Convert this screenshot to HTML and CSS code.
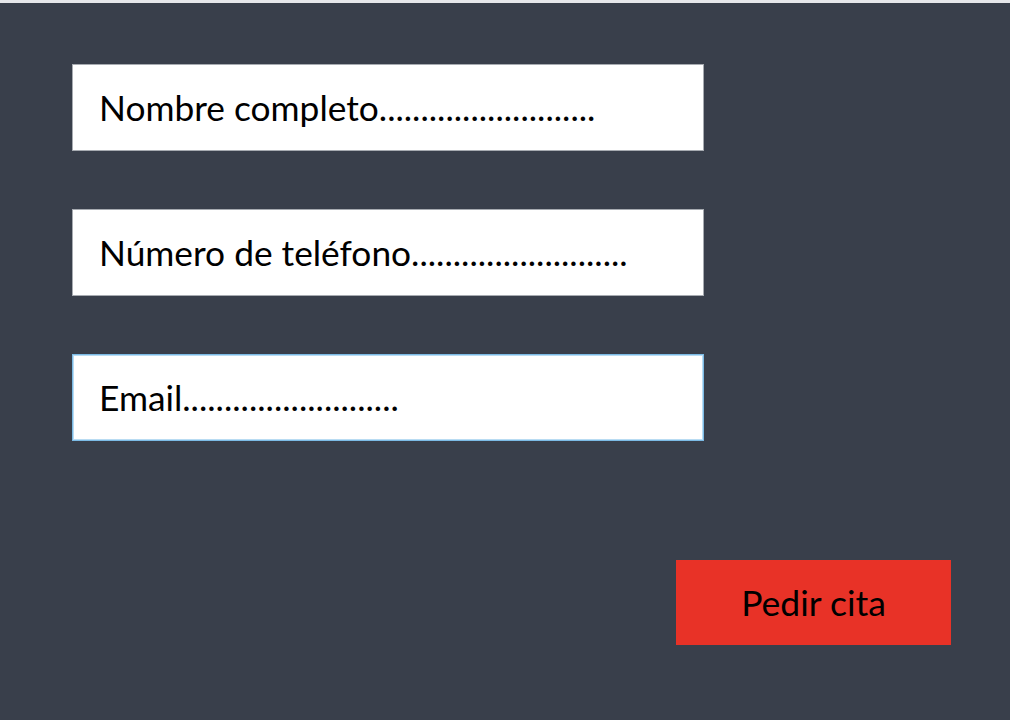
FILE: index.html
```html
<!DOCTYPE html>
<html lang="es">
<head>
<meta charset="utf-8">
<title>Pedir cita</title>
<link rel="stylesheet" href="styles.css">
</head>
<body>
<div class="topbar"></div>
<main class="panel">
  <form class="form">
    <div class="field"><span class="clip">Nombre completo..............................</span></div>
    <div class="field">Número de teléfono..........................</div>
    <div class="field field-focus">Email..........................</div>
    <div class="actions">
      <button type="button" class="btn">Pedir cita</button>
    </div>
  </form>
</main>
</body>
</html>
```
FILE: styles.css
```css
html, body {
  margin: 0;
  padding: 0;
}
body {
  width: 1010px;
  height: 720px;
  overflow: hidden;
  background: #393f4b;
  font-family: Lato, "Open Sans", sans-serif;
}
.topbar {
  height: 3px;
  background: #e6e7ea;
}
.panel {
  padding: 61px 0 0 72px;
}
.form {
  display: flex;
  flex-direction: column;
  gap: 58px;
  width: 632px;
}
.field {
  box-sizing: border-box;
  height: 87px;
  background: #ffffff;
  border: 1px solid #a7abb1;
  padding: 0 0 0 26px;
  display: flex;
  align-items: center;
  font-size: 35.3px;
  color: #000;
  white-space: nowrap;
  overflow: hidden;
}
.field-focus {
  border: 1px solid #7cbbe6;
  box-shadow: inset 0 0 0 1px #b9dcf3;
}
.clip {
  display: inline-block;
  width: 498px;
  overflow: hidden;
}
.actions {
  display: flex;
  justify-content: flex-end;
  margin-top: 61px;
  margin-right: -247px;
}
.btn {
  width: 275px;
  height: 85px;
  border: 0;
  background: #e83227;
  color: #000;
  font-family: Lato, "Open Sans", sans-serif;
  font-size: 35.5px;
  padding: 0;
  cursor: pointer;
}
```
